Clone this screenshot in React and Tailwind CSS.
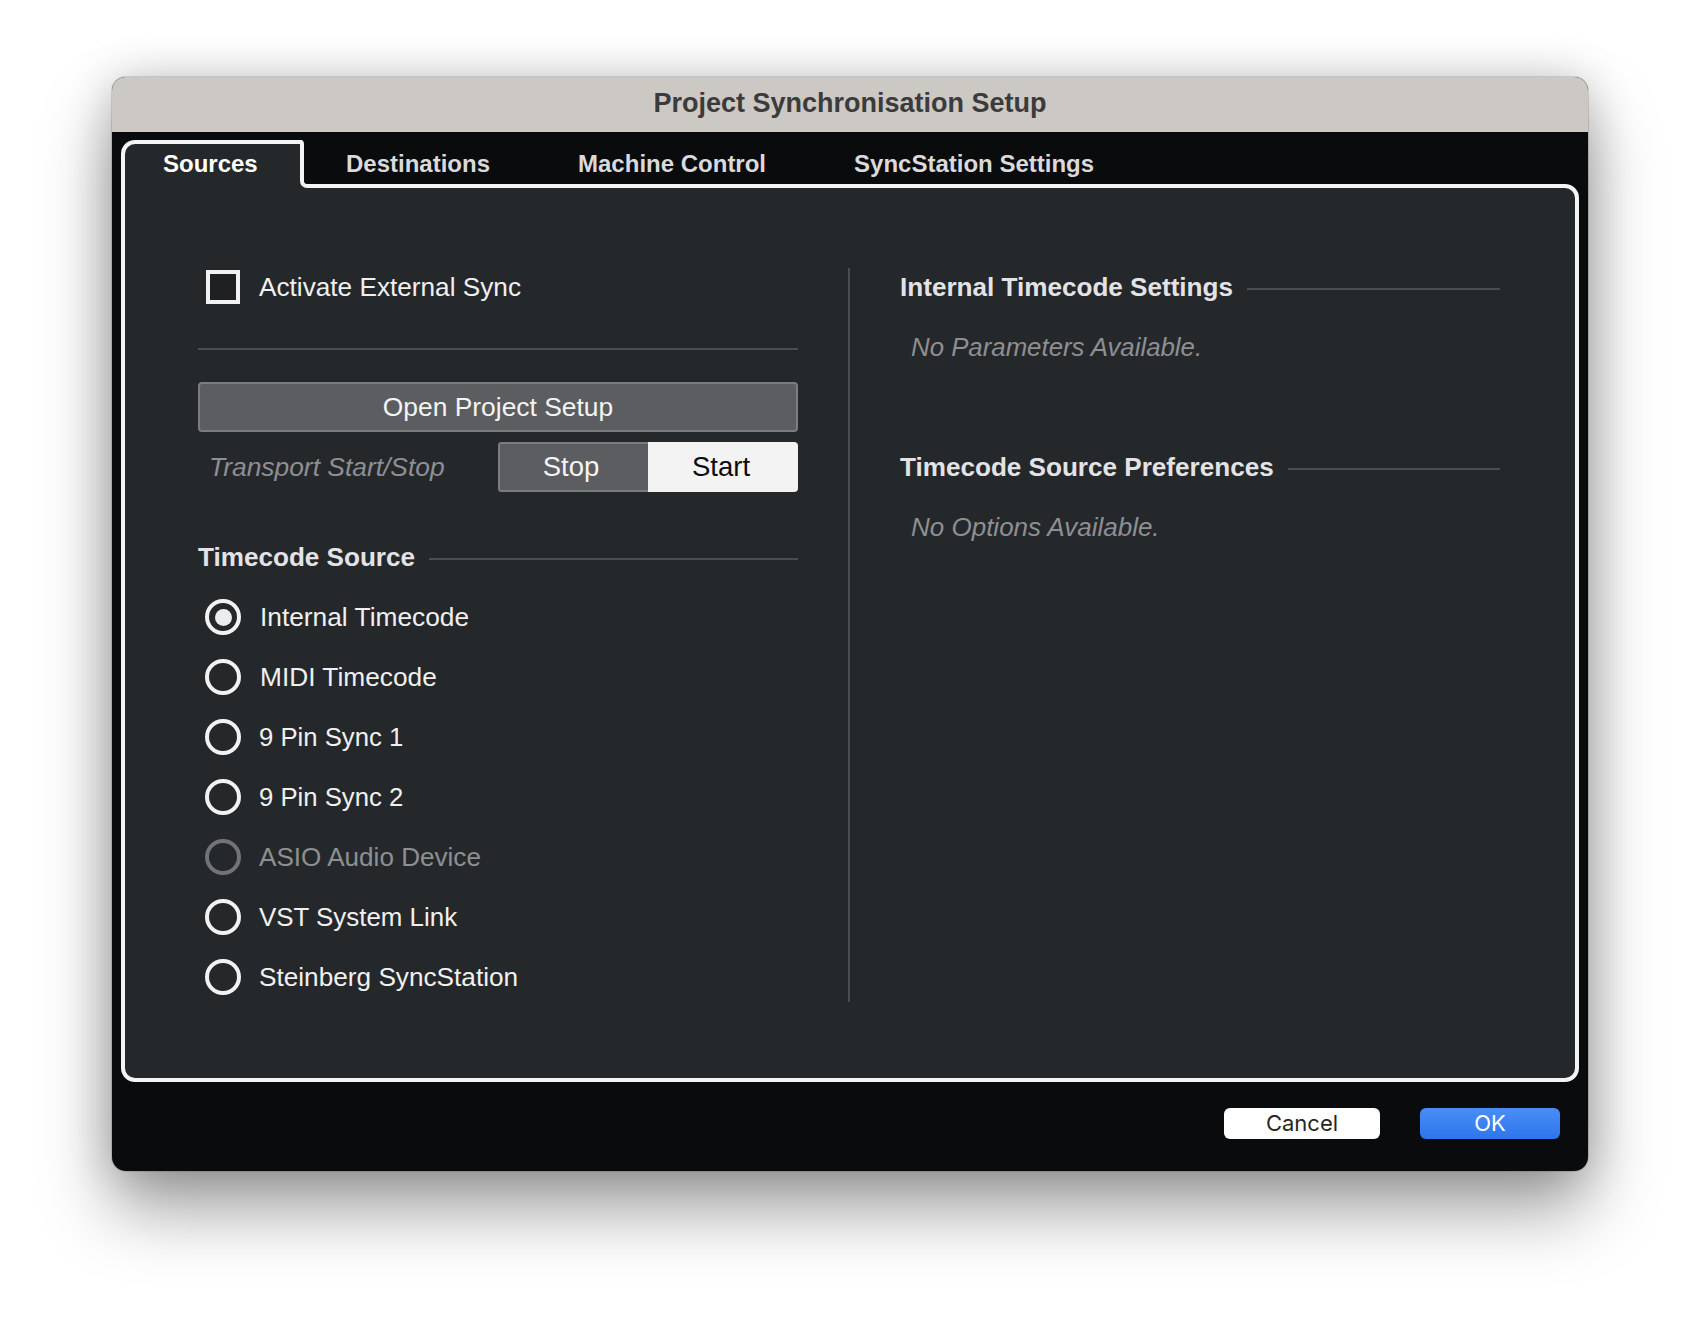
import React from "react";

const tabs = ["Destinations", "Machine Control", "SyncStation Settings"];

const sources = [
  { label: "Internal Timecode", checked: true, labelClass: "pl-[1px] text-[26.3px]" },
  { label: "MIDI Timecode", labelClass: "pl-[1px] text-[26.3px]" },
  { label: "9 Pin Sync 1", labelClass: "text-[25.7px]" },
  { label: "9 Pin Sync 2", labelClass: "text-[25.7px]" },
  { label: "ASIO Audio Device", disabled: true, labelClass: "text-[26.1px]" },
  { label: "VST System Link", labelClass: "text-[25.9px]" },
  { label: "Steinberg SyncStation", labelClass: "text-[26.2px]" },
];

const SectionHeading = ({ title }) => (
  <div className="flex h-[30px] items-center gap-[14px]">
    <span className="text-[26.1px] font-bold leading-[30px] text-[#e3e3e6] whitespace-nowrap">{title}</span>
    <div className="mt-[4px] h-[2px] flex-1 bg-[#4b4d51]" />
  </div>
);

const Radio = ({ label, checked, disabled, labelClass }) => (
  <div className="flex h-[36px] items-center gap-[18px] pl-[7px]">
    <div
      className={`flex h-[36px] w-[36px] items-center justify-center rounded-full border-4 ${
        disabled ? "border-[#717376]" : "border-[#f2f2f2]"
      }`}
    >
      {checked && <div className="h-[17px] w-[17px] rounded-full bg-[#ececee]" />}
    </div>
    <span className={`leading-[30px] ${labelClass} ${disabled ? "text-[#8e8f92]" : "text-[#f0f0f0]"}`}>{label}</span>
  </div>
);

export default function App() {
  return (
    <div className="h-[1318px] w-[1700px] overflow-hidden bg-white pl-[112px] pt-[77px] font-['Liberation_Sans',sans-serif]">
      <div className="flex h-[1094px] w-[1476px] flex-col overflow-hidden rounded-[14px] bg-[#0a0b0d] shadow-[0_0_0_1px_rgba(0,0,0,0.12),0_38px_70px_rgba(0,0,0,0.38),0_0_45px_rgba(0,0,0,0.18)]">
        {/* Title bar */}
        <div className="flex h-[55px] items-center justify-center bg-[#ccc8c4] pb-[2px] text-[27px] font-bold text-[#3b3b3b]">
          Project Synchronisation Setup
        </div>

        <div className="flex flex-1 flex-col pl-[9px] pr-[9px] pt-[8px]">
          {/* Tabs */}
          <div className="relative z-10 flex h-[44px] items-start">
            <div className="relative h-[48px] w-[183px] rounded-tl-[14px] rounded-tr-[4px] border-4 border-b-0 border-[#f4f4f4] bg-[#25282b] pl-[38px] pt-[2px] text-[24px] font-bold text-white">
              Sources
              {/* fillet where the tab runs into the panel's top line */}
              <div className="absolute bottom-0 left-full h-[14px] w-[14px] bg-[#25282b]">
                <div className="h-full w-full rounded-bl-[7px] border-b-4 border-l-4 border-[#f4f4f4] bg-[#0a0b0d]" />
              </div>
            </div>
            <div className="flex gap-[88px] pl-[42px] pt-[5.5px] text-[24px] font-bold text-[#dadadc]">
              {tabs.map((t) => (
                <span key={t}>{t}</span>
              ))}
            </div>
          </div>

          {/* Panel */}
          <div className="h-[898px] rounded-b-[14px] rounded-tr-[14px] border-4 border-[#f4f4f4] bg-[#25282b] pl-[73px] pt-[80px]">
            <div className="flex h-[734px] items-stretch">
              {/* Left column */}
              <div className="w-[600px]">
                <div className="flex h-[38px] items-center gap-[19px] pl-[8px]">
                  <div className="h-[34px] w-[34px] border-4 border-[#f2f2f2] bg-[#1e2023]" />
                  <span className="text-[26.2px] leading-[30px] text-[#f0f0f0]">Activate External Sync</span>
                </div>
                <div className="mt-[42px] h-[2px] bg-[#4b4d51]" />
                <div className="mt-[32px] flex h-[50px] items-center justify-center rounded-[4px] border-2 border-[#7b7c80] bg-[#5c5d61] pt-[2px] text-[26.4px] text-[#f4f4f4]">
                  Open Project Setup
                </div>
                <div className="mt-[10px] flex h-[50px] items-center justify-between">
                  <span className="pl-[11px] pt-[2px] text-[26.4px] italic text-[#8e8f92]">Transport Start/Stop</span>
                  <div className="flex h-[50px] w-[300px] overflow-hidden rounded-[4px] text-[27.5px]">
                    <div className="flex w-[150px] items-center justify-center border-2 border-r-0 border-[#7b7c80] bg-[#5c5d61] pr-[6px] text-[#f4f4f4]">
                      Stop
                    </div>
                    <div className="flex w-[150px] items-center justify-center bg-[#f3f3f3] pr-[4px] text-[#0c0c0c]">Start</div>
                  </div>
                </div>
                <div className="mt-[50px]">
                  <SectionHeading title="Timecode Source" />
                </div>
                <div className="mt-[27px] flex flex-col gap-[24px]">
                  {sources.map((s) => (
                    <Radio key={s.label} {...s} />
                  ))}
                </div>
              </div>

              <div className="ml-[50px] w-[2px] bg-[#4b4d51]" />

              {/* Right column */}
              <div className="ml-[50px] w-[600px] pt-[4px]">
                <SectionHeading title="Internal Timecode Settings" />
                <div className="mt-[30px] pl-[11px] text-[25.8px] leading-[30px] italic text-[#8e8f92]">No Parameters Available.</div>
                <div className="mt-[90px]">
                  <SectionHeading title="Timecode Source Preferences" />
                </div>
                <div className="mt-[30px] pl-[11px] text-[26px] leading-[30px] italic text-[#8e8f92]">No Options Available.</div>
              </div>
            </div>
          </div>

          {/* Footer */}
          <div className="flex justify-end gap-[40px] pr-[19px] pt-[26px] font-['Inter',sans-serif] text-[22px]">
            <div className="flex h-[31px] w-[156px] items-center justify-center rounded-[6px] bg-white text-[#262626]">Cancel</div>
            <div className="flex h-[31px] w-[140px] items-center justify-center rounded-[6px] bg-gradient-to-b from-[#4a8df6] to-[#2c76ec] text-white">OK</div>
          </div>
        </div>
      </div>
    </div>
  );
}
